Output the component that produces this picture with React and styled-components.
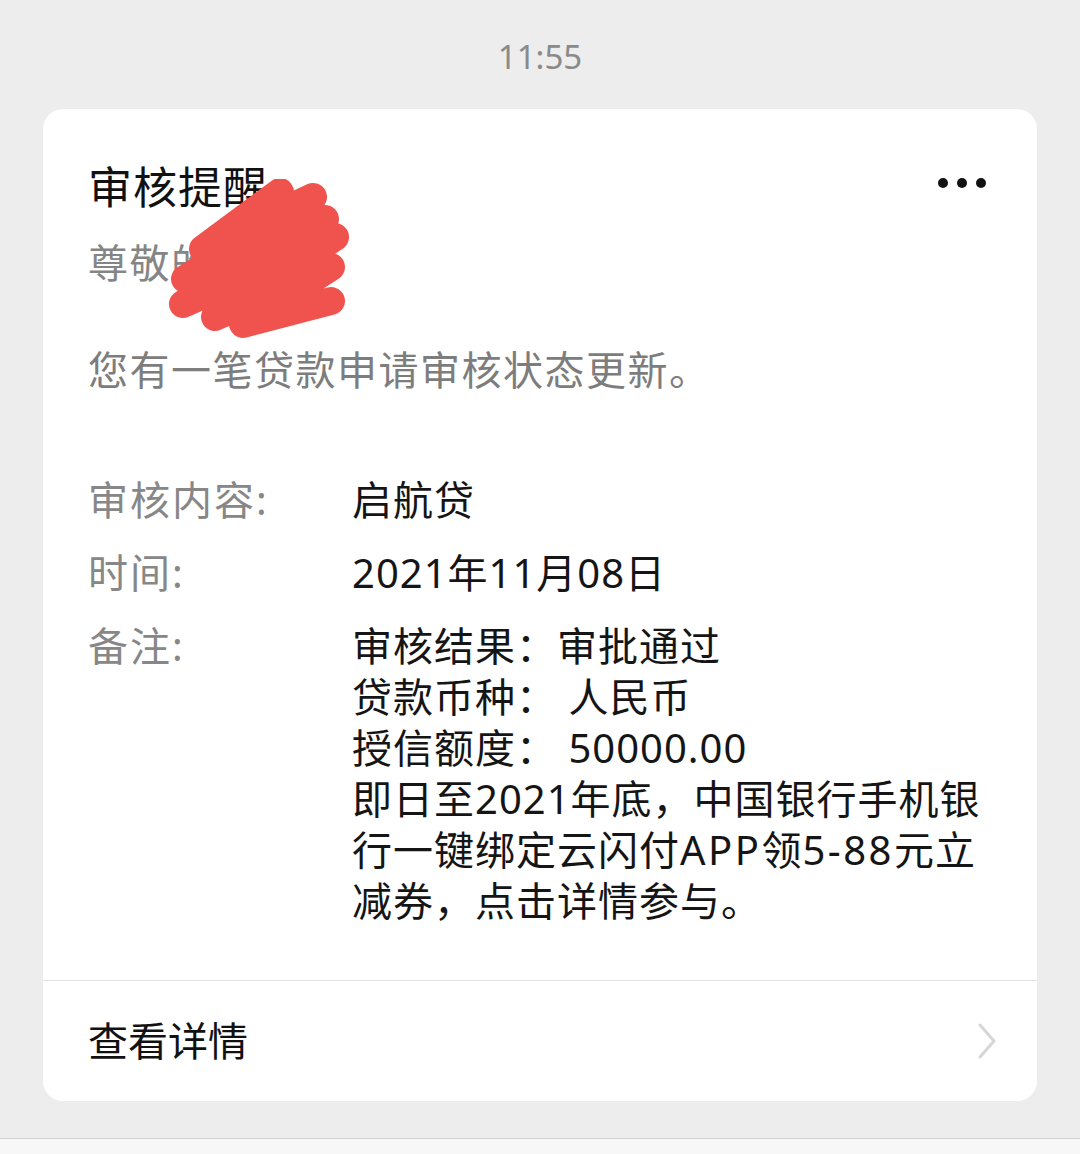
import React from "react";
import styled, { createGlobalStyle } from "styled-components";

const GlobalStyle = createGlobalStyle`
  html, body {
    margin: 0;
    padding: 0;
    background: #ededed;
  }
  body {
    font-family: "Noto Sans", "Noto Sans CJK SC", sans-serif;
    -webkit-font-smoothing: antialiased;
  }
`;

const Page = styled.div`
  width: 1080px;
  min-height: 1154px;
  background: #ededed;
  display: flex;
  flex-direction: column;
`;

const Time = styled.div`
  height: 109px;
  display: flex;
  align-items: flex-start;
  justify-content: center;
  padding-top: 36px;
  box-sizing: border-box;
  font-size: 33px;
  line-height: 42px;
  color: #8a8a8a;
`;

const Card = styled.div`
  position: relative;
  margin: 0 43px;
  background: #ffffff;
  border-radius: 20px;
  overflow: hidden;
`;

const Body = styled.div`
  padding: 50px 51px 54px 45px;
  display: flex;
  flex-direction: column;
`;

const Header = styled.div`
  display: flex;
  align-items: center;
  justify-content: space-between;
`;

const Title = styled.div`
  font-size: 44px;
  line-height: 56px;
  letter-spacing: 1px;
  color: #111111;
`;

const Dots = styled.div`
  display: flex;
  gap: 9px;
  margin-top: -8px;
`;

const Dot = styled.span`
  width: 10px;
  height: 10px;
  border-radius: 50%;
  background: #111111;
`;

const Greeting = styled.div`
  margin-top: 20px;
  font-size: 40px;
  line-height: 56px;
  letter-spacing: 1.5px;
  color: #858585;
`;

const Message = styled.div`
  margin-top: 51px;
  font-size: 40px;
  line-height: 56px;
  letter-spacing: 1.5px;
  color: #7d7d7d;
`;

const Fields = styled.div`
  margin-top: 76px;
  display: grid;
  grid-template-columns: 264px 1fr;
  row-gap: 22px;
`;

const Label = styled.div`
  font-size: 40px;
  line-height: 51px;
  letter-spacing: 2px;
  color: #878787;
`;

const Value = styled.div`
  font-size: 40px;
  line-height: 51px;
  letter-spacing: 1px;
  color: #151515;
`;

const Line = styled.div`
  white-space: pre;
`;

const Latin = styled.span`
  letter-spacing: 2.5px;
`;

const Divider = styled.div`
  height: 1px;
  background: #e3e3e3;
`;

const Footer = styled.div`
  height: 120px;
  display: flex;
  align-items: center;
  justify-content: space-between;
  padding: 0 40px 0 45px;
`;

const FooterText = styled.div`
  font-size: 40px;
  line-height: 56px;
  color: #111111;
`;

const Scribble = styled.svg`
  position: absolute;
  left: 120px;
  top: 70px;
  width: 190px;
  height: 160px;
  pointer-events: none;
`;

const Spacer = styled.div`
  flex: 1;
  min-height: 37px;
`;

const BottomBar = styled.div`
  height: 15px;
  border-top: 1px solid #d2d2d2;
  background: #f7f7f7;
`;

const Chevron = () => (
  <svg width="20" height="36" viewBox="0 0 20 36">
    <path
      d="M3 2 L17 18 L3 34"
      fill="none"
      stroke="#d6d6d6"
      strokeWidth="3"
      strokeLinecap="round"
      strokeLinejoin="round"
    />
  </svg>
);

export default function App() {
  return (
    <>
      <GlobalStyle />
      <Page>
        <Time>11:55</Time>
        <Card>
          <Body>
            <Header>
              <Title>审核提醒</Title>
              <Dots>
                <Dot />
                <Dot />
                <Dot />
              </Dots>
            </Header>
            <Greeting>尊敬的客户：</Greeting>
            <Message>您有一笔贷款申请审核状态更新。</Message>
            <Fields>
              <Label>审核内容:</Label>
              <Value>启航贷</Value>
              <Label>时间:</Label>
              <Value>2021年11月08日</Value>
              <Label>备注:</Label>
              <Value>
                <Line>审核结果：审批通过</Line>
                <Line>贷款币种： 人民币</Line>
                <Line>授信额度： 50000.00</Line>
                <Line>即日至2021年底，中国银行手机银</Line>
                <Line>
                  行一键绑定云闪付<Latin>APP</Latin>领<Latin>5-88</Latin>元立
                </Line>
                <Line>减券，点击详情参与。</Line>
              </Value>
            </Fields>
          </Body>
          <Divider />
          <Footer>
            <FooterText>查看详情</FooterText>
            <Chevron />
          </Footer>
          <Scribble viewBox="0 0 190 160">
            <path
              d="M117 13 L40 70 L150 18 L22 100 L162 40 L20 125 L172 58 L52 138 L168 88 L80 145 L168 122"
              fill="none"
              stroke="#f0534e"
              strokeWidth="28"
              strokeLinecap="round"
              strokeLinejoin="round"
            />
          </Scribble>
        </Card>
        <Spacer />
        <BottomBar />
      </Page>
    </>
  );
}
